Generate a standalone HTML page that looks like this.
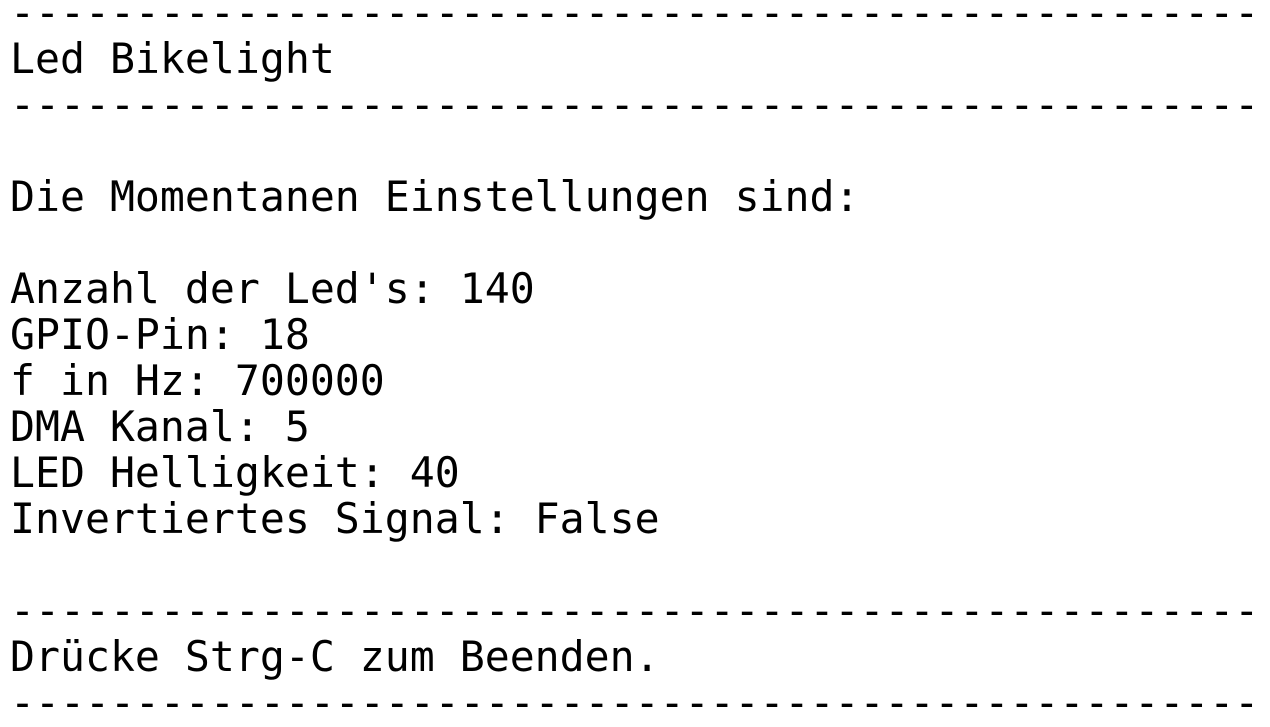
<!DOCTYPE html>
<html><head><meta charset="utf-8"><style>
html,body{margin:0;padding:0;background:#fff;width:1270px;height:718px;overflow:hidden}
pre{margin:0;position:absolute;left:10px;top:-10px;font-family:"DejaVu Sans Mono","Liberation Mono",monospace;font-size:41.5px;line-height:46px;color:#000;letter-spacing:0px}
</style></head><body><pre>--------------------------------------------------
Led Bikelight
--------------------------------------------------

Die Momentanen Einstellungen sind:

Anzahl der Led's: 140
GPIO-Pin: 18
f in Hz: 700000
DMA Kanal: 5
LED Helligkeit: 40
Invertiertes Signal: False

--------------------------------------------------
Drücke Strg-C zum Beenden.
--------------------------------------------------</pre></body></html>
